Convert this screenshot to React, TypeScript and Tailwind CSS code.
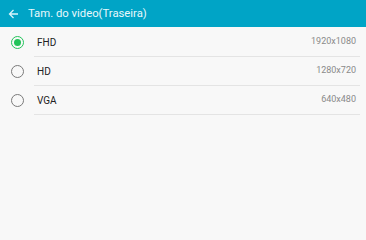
import React from 'react';

const options = [
  { name: 'FHD', res: '1920x1080', selected: true },
  { name: 'HD', res: '1280x720', selected: false },
  { name: 'VGA', res: '640x480', selected: false },
];

export default function App() {
  return (
    <div
      className="w-full min-h-screen bg-[#f8f8f8] flex flex-col"
      style={{ fontFamily: 'Roboto, "Liberation Sans", sans-serif' }}
    >
      {/* Header */}
      <div className="h-[27px] bg-[#00a4c6] flex items-center pl-[8px] gap-[9px] shrink-0">
        <svg width="11" height="10" viewBox="0 0 11 10" fill="none">
          <path d="M10 5H1.5M5.5 1L1.5 5L5.5 9" stroke="#d8f4fb" strokeWidth="1.3" />
        </svg>
        <span className="text-[11.3px] text-[#e8f8fc] leading-none">Tam. do video(Traseira)</span>
      </div>

      {/* Options */}
      <div className="flex flex-col pt-[1px]">
        {options.map((o) => (
          <div key={o.name} className="flex items-center h-[29px]">
            <div className="w-[34px] flex justify-center pl-[1px] shrink-0">
              {o.selected ? (
                <div className="w-[13px] h-[13px] rounded-full border-[1.5px] border-[#22c35a] flex items-center justify-center">
                  <div className="w-[7px] h-[7px] rounded-full bg-[#22c35a]" />
                </div>
              ) : (
                <div className="w-[13px] h-[13px] rounded-full border-[1.2px] border-[#7a7a7a]" />
              )}
            </div>
            <div className="flex-1 mr-[6px] h-full flex items-center justify-between border-b border-[#e4e4e4] pl-[3px] pr-[4px]">
              <span className="text-[10px] text-[#222]">{o.name}</span>
              <span className="text-[9px] text-[#8a8a8a]">{o.res}</span>
            </div>
          </div>
        ))}
      </div>
    </div>
  );
}
